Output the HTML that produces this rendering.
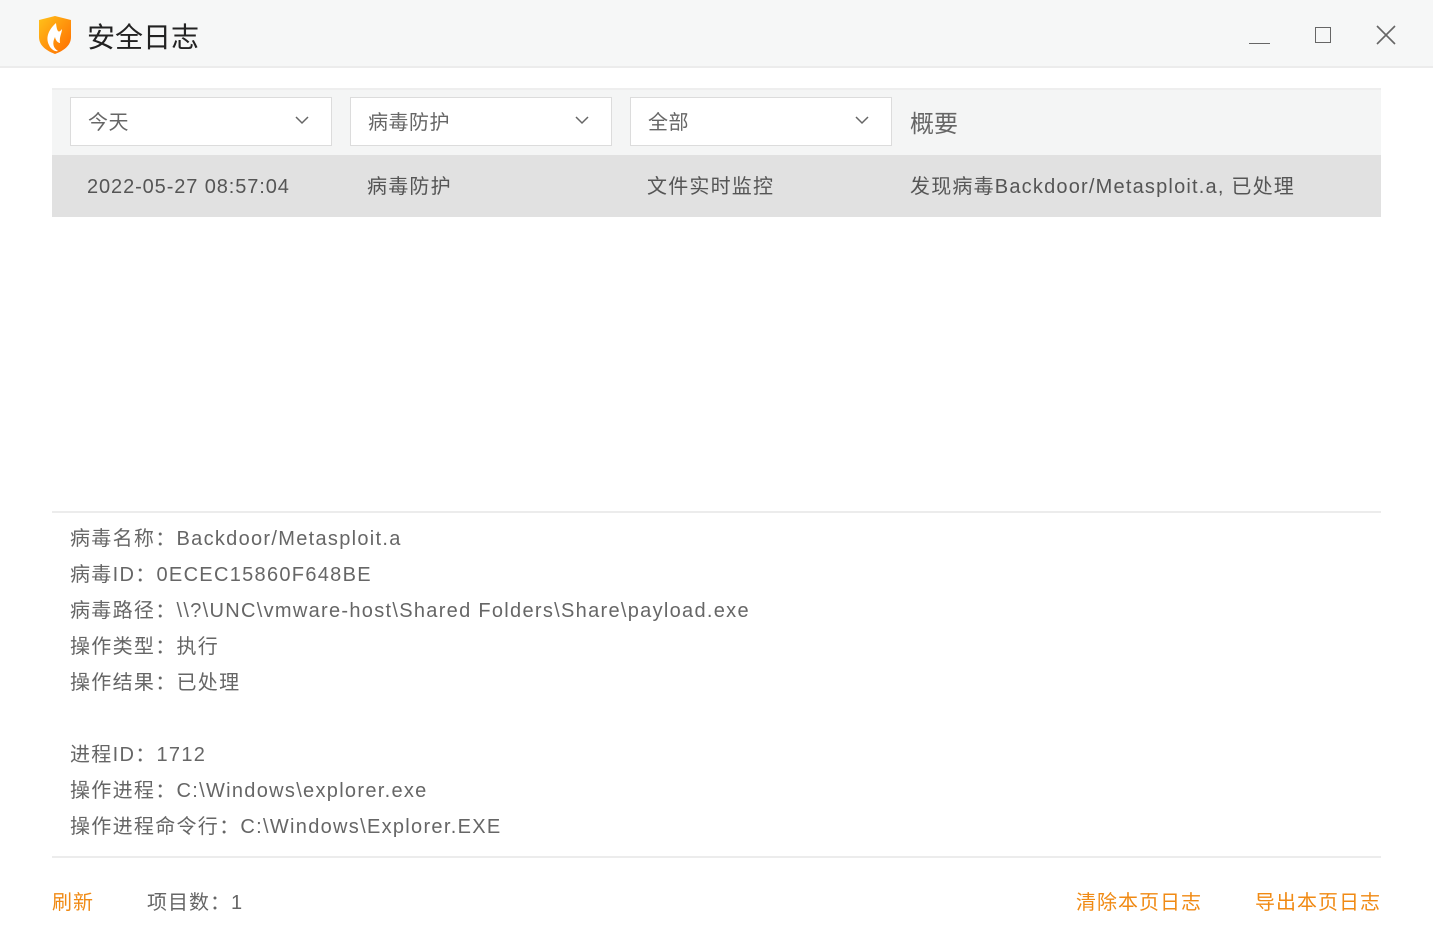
<!DOCTYPE html>
<html><head><meta charset="utf-8"><style>
*{margin:0;padding:0;box-sizing:border-box}
body{width:1433px;height:940px;background:#fff;font-family:"Liberation Sans","Noto Sans CJK SC",sans-serif;position:relative;overflow:hidden;color:#666}
.abs{position:absolute;white-space:nowrap}
.title{left:0;top:0;width:1433px;height:68px;background:#f6f7f7;border-bottom:2px solid #ececec}
.hdr{left:52px;top:88px;width:1329px;height:67px;background:#f4f5f5;border-top:2px solid #eeeeee}
.dd{top:97px;width:262px;height:49px;background:#fff;border:1px solid #dcdcdc;font-size:20px;color:#666;padding:12px 17px 0;line-height:27px;letter-spacing:0.5px}
.dd svg{position:absolute;right:22px;top:18px}
.row{left:52px;top:155px;width:1329px;height:62px;background:#e1e1e1;font-size:20px;color:#555;letter-spacing:1.2px}
.row span{position:absolute;top:15px}
.line{left:52px;width:1329px;height:2px;background:#ececec}
.d{left:70px;font-size:20px;color:#666;letter-spacing:1.3px}
.or{color:#f08a14;font-size:20px;letter-spacing:1px}
</style></head><body>
<div class="abs title"></div>
<svg class="abs" style="left:37px;top:15px" width="36" height="40" viewBox="0 0 36 40">
<defs><linearGradient id="g" x1="0" y1="0" x2="1" y2="1"><stop offset="0" stop-color="#ffc21a"/><stop offset="1" stop-color="#ff6a00"/></linearGradient></defs>
<path d="M2 5 L18 1 L34 5 V22 C34 31 26 36 18 39 C10 36 2 31 2 22Z" fill="url(#g)"/>
<path d="M19 8 C10 16 9 24 12 30 C14 35 19 37 21 36 C16 33 15 28 18 22 C19 27 22 28 23 28 C22 22 25 18 25 14 C22 18 20 18 19 8Z" fill="#fff"/>
</svg>
<div class="abs" style="left:87px;top:16px;font-size:28px;color:#222">安全日志</div>
<div class="abs" style="left:1249px;top:43px;width:21px;height:1px;background:#666"></div>
<div class="abs" style="left:1315px;top:27px;width:16px;height:16px;border:1.5px solid #666"></div>
<svg class="abs" style="left:1376px;top:25px" width="20" height="20"><path d="M1 1L19 19M19 1L1 19" stroke="#666" stroke-width="1.6"/></svg>
<div class="abs hdr"></div>
<div class="abs dd" style="left:70px">今天<svg width="14" height="9"><path d="M1 1L7 7L13 1" fill="none" stroke="#666" stroke-width="1.5"/></svg></div>
<div class="abs dd" style="left:350px">病毒防护<svg width="14" height="9"><path d="M1 1L7 7L13 1" fill="none" stroke="#666" stroke-width="1.5"/></svg></div>
<div class="abs dd" style="left:630px">全部<svg width="14" height="9"><path d="M1 1L7 7L13 1" fill="none" stroke="#666" stroke-width="1.5"/></svg></div>
<div class="abs" style="left:910px;top:104px;font-size:24px;color:#666">概要</div>
<div class="abs row"><span style="left:35px;top:21px;letter-spacing:0.9px">2022-05-27 08:57:04</span><span style="left:315px">病毒防护</span><span style="left:595px">文件实时监控</span><span style="left:858px">发现病毒Backdoor/Metasploit.a, 已处理</span></div>
<div class="abs line" style="top:511px"></div>
<div class="abs d" style="top:522px">病毒名称：Backdoor/Metasploit.a</div>
<div class="abs d" style="top:558px">病毒ID：0ECEC15860F648BE</div>
<div class="abs d" style="top:594px">病毒路径：\\?\UNC\vmware-host\Shared Folders\Share\payload.exe</div>
<div class="abs d" style="top:630px">操作类型：执行</div>
<div class="abs d" style="top:666px">操作结果：已处理</div>
<div class="abs d" style="top:738px">进程ID：1712</div>
<div class="abs d" style="top:774px">操作进程：C:\Windows\explorer.exe</div>
<div class="abs d" style="top:810px">操作进程命令行：C:\Windows\Explorer.EXE</div>
<div class="abs line" style="top:856px"></div>
<div class="abs or" style="left:52px;top:886px">刷新</div>
<div class="abs" style="left:147px;top:886px;font-size:20px;color:#666;letter-spacing:1px">项目数：1</div>
<div class="abs or" style="left:1076px;top:886px">清除本页日志</div>
<div class="abs or" style="left:1255px;top:886px">导出本页日志</div>
</body></html>
